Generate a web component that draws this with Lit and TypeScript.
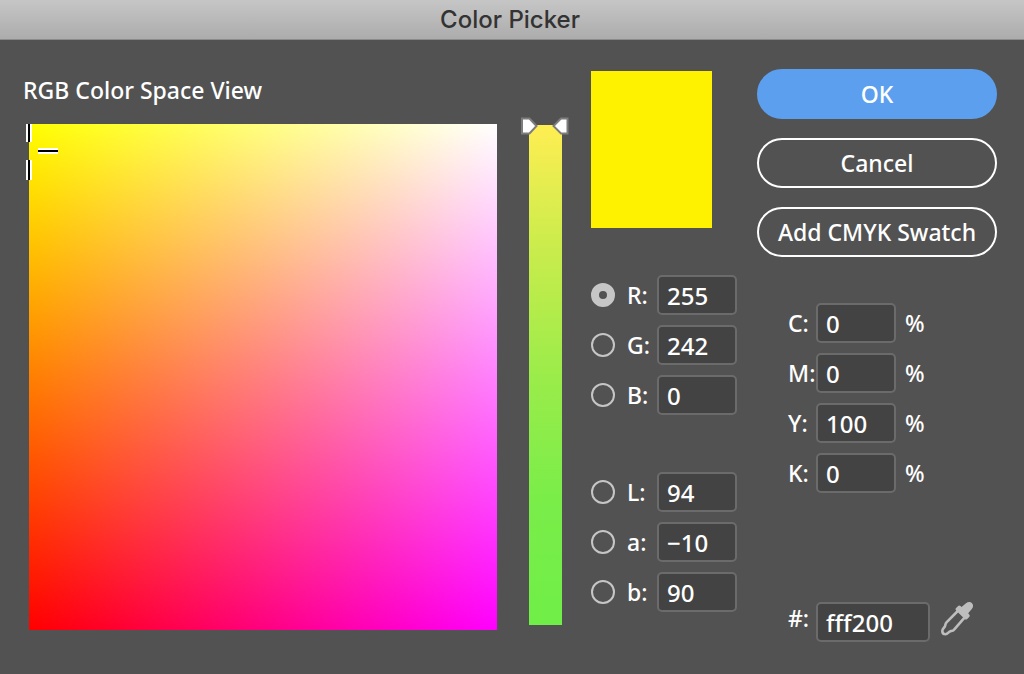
import { LitElement, html, css, svg } from "lit";
import { customElement, property } from "lit/decorators.js";

const fieldStyles = css`
  *, *::before, *::after { box-sizing: border-box; }
  label { color: #fff; line-height: 32px; white-space: nowrap; }
  .field {
    display: block;
    width: 100%;
    min-width: 0;
    height: 40px;
    margin: 0;
    padding: 0 8px;
    border: 2px solid #6b6b6b;
    border-radius: 5px;
    background: #434343;
    color: #fff;
    font: inherit;
    font-size: 24px;
    outline: none;
  }
  .field:focus-visible { border-color: #5c9fee; }
`;

@customElement("channel-row")
class ChannelRow extends LitElement {
  @property() label = "";
  @property() value = "";
  @property({ type: Boolean }) checked = false;

  static styles = [fieldStyles, css`
    :host { display: grid; grid-template-columns: 24px 1fr 80px; column-gap: 12px; align-items: center; }
    .radio {
      appearance: none;
      width: 24px;
      height: 24px;
      margin: 0;
      border: 2px solid #c6c6c6;
      border-radius: 50%;
      background: transparent;
    }
    .radio:checked { border-width: 8px; }
    label { min-width: 0; }
  `];

  select() {
    this.dispatchEvent(new CustomEvent("channel-select", { detail: this.label, bubbles: true, composed: true }));
  }

  render() {
    return html`
      <input class="radio" type="radio" aria-label="${this.label} channel" .checked=${this.checked} @change=${this.select}>
      <label for="value">${this.label}:</label>
      <input class="field" id="value" type="text" .value=${this.value}>
    `;
  }
}

@customElement("percent-row")
class PercentRow extends LitElement {
  @property() label = "";
  @property() value = "";

  static styles = [fieldStyles, css`
    :host { display: grid; grid-template-columns: 28px 80px auto; justify-content: start; align-items: center; }
    .unit { padding-left: 9px; }
  `];

  render() {
    return html`
      <label for="value">${this.label}:</label>
      <input class="field" id="value" type="text" .value=${this.value}>
      <span class="unit">%</span>
    `;
  }
}

const eyedropper = svg`
  <path fill="#bdbdbd" d="M21.500 5l4.500-3.800c2.200-1.700 4.600-1.500 6 0 1.500 1.500 1.400 4-.2 5.900L28.200 11.300l1 1.200c.8.9.8 1.700 0 2.500l-2 1.900c-.9.8-1.700.8-2.500 0l-8.600-8.500c-.8-.8-.8-1.600 0-2.400l2-2c.8-.8 1.600-.8 2.400 0z"/>
  <path fill="none" stroke="#bdbdbd" stroke-width="2.600" stroke-linejoin="round" d="M17.800 9L6.500 20.400c-1.300 1.300-1 3-1.800 4.400-.8 1.300-2.400 2.200-2.400 4.200s1.400 3.200 3.200 3.200c2 0 2.800-1.800 4.200-2.600 1.400-.7 3-.6 4.200-1.800L24.500 15.700"/>
`;

@customElement("app-root")
class AppRoot extends LitElement {
  @property({ attribute: false }) channel = "R";

  rgb = [["R", "255"], ["G", "242"], ["B", "0"]];
  lab = [["L", "94"], ["a", "−10"], ["b", "90"]];
  cmyk = [["C", "0"], ["M", "0"], ["Y", "100"], ["K", "0"]];

  static styles = [fieldStyles, css`
    :host {
      display: flex;
      flex-direction: column;
      min-height: 100vh;
      box-sizing: border-box;
      background: #525252;
      color: #fff;
      font: 500 23px/32px "Noto Sans", "Open Sans", sans-serif;
    }
    .titlebar {
      height: 40px;
      border-bottom: 1px solid #8b8b8b;
      background: linear-gradient(#c6c6c6, #acacac);
    }
    .title {
      margin: 0;
      padding-right: 4px;
      text-align: center;
      color: #333;
      font: 500 24px/40px Inter, sans-serif;
    }
    .dialog {
      flex: 1;
      display: grid;
      grid-template-columns: minmax(160px, 1fr) 62px 166px 240px;
      padding: 0 27px 0 23px;
    }
    .space { display: flex; flex-direction: column; padding: 34px 32px 44px 0; }
    .heading { margin: 0 0 18px; font: inherit; }
    .plane {
      position: relative;
      flex: 1;
      min-height: 300px;
      margin-left: 6px;
      background: linear-gradient(to right, #f00, #f0f), linear-gradient(#0f0, #000);
      background-blend-mode: screen;
    }
    .cursor { position: absolute; left: -4px; top: 0; display: block; }
    .hue {
      position: relative;
      width: 33px;
      margin: 85px 0 49px;
      background: linear-gradient(#ffee52, #c9ec4c 25%, #9bec4a 50%, #7aed49 75%, #70ee48);
    }
    .range {
      appearance: none;
      position: absolute;
      inset: 0;
      width: 100%;
      height: 100%;
      margin: 0;
      background: transparent;
      writing-mode: vertical-lr;
      direction: rtl;
    }
    .range::-webkit-slider-thumb { appearance: none; width: 33px; height: 12px; background: transparent; }
    .thumbs { position: absolute; left: -9px; top: -9px; display: block; pointer-events: none; }
    .channels { display: flex; flex-direction: column; width: 146px; padding-top: 31px; }
    .preview { width: 121px; height: 157px; margin-bottom: 47px; background: #fff200; }
    .group { display: flex; flex-direction: column; gap: 10px; }
    .lab { margin-top: 57px; }
    .actions { display: flex; flex-direction: column; padding: 29px 0 32px; }
    .buttons { display: flex; flex-direction: column; gap: 19px; margin-bottom: 46px; }
    .button {
      height: 50px;
      padding: 0;
      border: 2px solid #fff;
      border-radius: 25px;
      background: transparent;
      color: #fff;
      font: inherit;
    }
    .primary { border-color: #5c9fee; background: #5c9fee; }
    .inks { padding-left: 31px; }
    .hex {
      display: grid;
      grid-template-columns: 28px 114px auto;
      justify-content: start;
      align-items: start;
      margin-top: auto;
      padding-left: 31px;
    }
    .dropper { display: block; margin-left: 10px; padding: 0; border: 0; background: transparent; }
    .dropper svg { display: block; }
  `];

  row = ([label, value]: string[]) => html`
    <channel-row .label=${label} .value=${value} .checked=${this.channel === label}></channel-row>
  `;

  render() {
    return html`
      <header class="titlebar"><h1 class="title">Color Picker</h1></header>
      <main class="dialog" @channel-select=${(e: CustomEvent) => { this.channel = e.detail; }}>
        <section class="space">
          <h2 class="heading">RGB Color Space View</h2>
          <div class="plane">
            <svg class="cursor" width="36" height="58" viewBox="0 0 36 58">
              <path fill="#fff" d="M1 0h6v18h-6zM1 36h6v20h-6zM13 24h20v6h-20z"/>
              <path fill="#000" d="M3 0h2v18h-2zM3 36h2v20h-2zM13 26h20v2h-20z"/>
            </svg>
          </div>
        </section>
        <div class="hue">
          <input class="range" type="range" min="0" max="255" value="255" aria-label="Red">
          <svg class="thumbs" width="50" height="20" viewBox="0 0 50 20">
            <g fill="#fff" stroke="#7d7d7d" stroke-width="2">
              <path d="M2 2.500h7.500l7 7.500-7 7.500H2z"/>
              <path d="M47.500 2.500H41l-7.500 7.500 7.500 7.500h6.500z"/>
            </g>
          </svg>
        </div>
        <section class="channels">
          <div class="preview"></div>
          <div class="group" role="group" aria-label="RGB">${this.rgb.map(this.row)}</div>
          <div class="group lab" role="group" aria-label="Lab">${this.lab.map(this.row)}</div>
        </section>
        <section class="actions">
          <div class="buttons">
            <button class="button primary">OK</button>
            <button class="button">Cancel</button>
            <button class="button">Add CMYK Swatch</button>
          </div>
          <div class="group inks">
            ${this.cmyk.map(([label, value]) => html`<percent-row .label=${label} .value=${value}></percent-row>`)}
          </div>
          <div class="hex">
            <label for="hex">#:</label>
            <input class="field" id="hex" type="text" value="fff200">
            <button class="dropper" aria-label="Eyedropper">
              <svg width="34" height="34" viewBox="0 0 34 34">${eyedropper}</svg>
            </button>
          </div>
        </section>
      </main>
    `;
  }
}
